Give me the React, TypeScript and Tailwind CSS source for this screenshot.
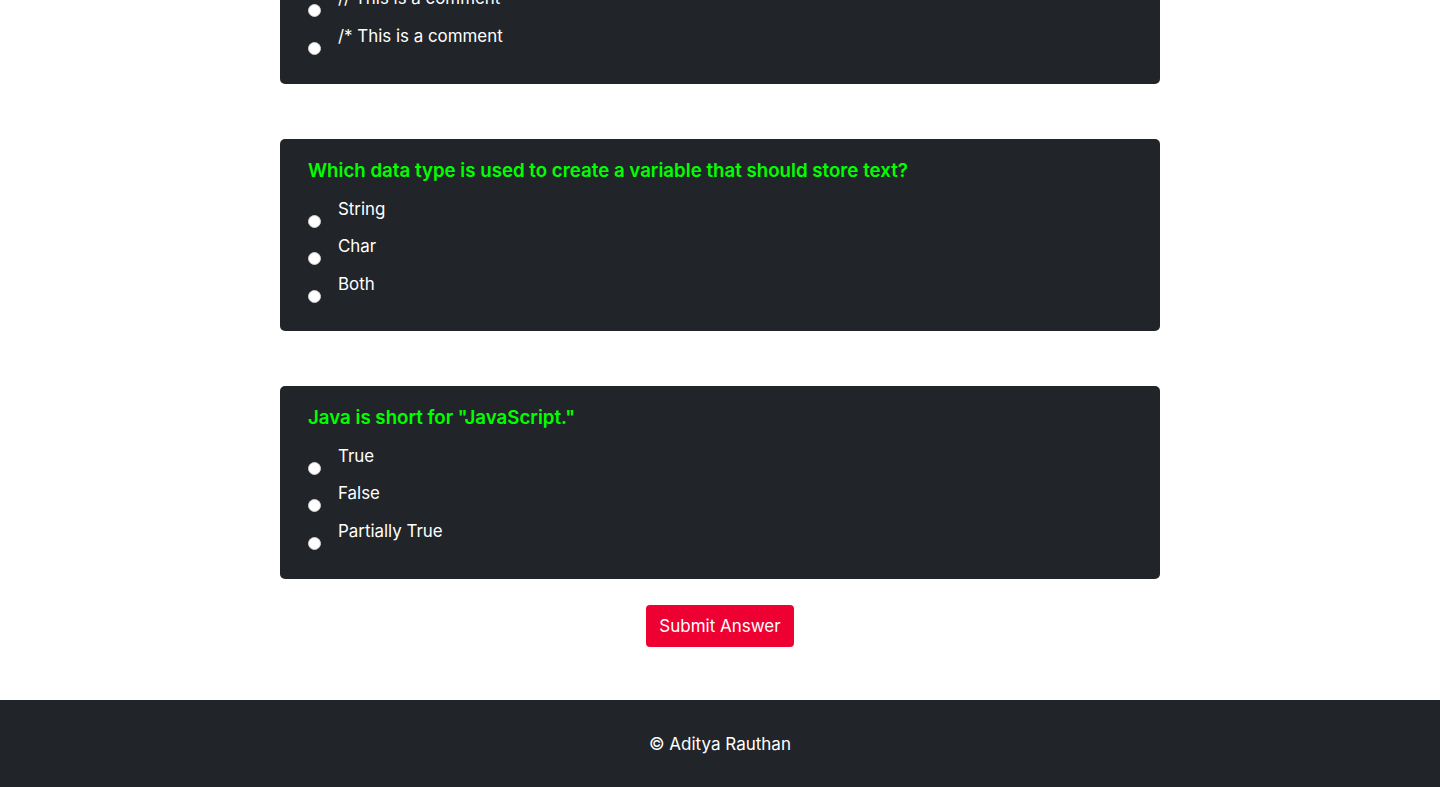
import React from "react";

const Radio = () => (
  <span className="absolute left-[27.5px] top-[19px] block h-[13px] w-[13px] rounded-full border border-[#d0d0d0] bg-white" />
);

const Option = ({ label }: { label: string }) => (
  <div className="relative h-[37.5px]">
    <Radio />
    <span className="absolute left-[58px] top-0 text-[16.9px] leading-[27px] text-white">{label}</span>
  </div>
);

const Card = ({ title, options, extra }: { title: string; options: string[]; extra?: boolean }) => (
  <div className={`rounded-[5px] bg-[#212529] pt-[19px] ${extra ? "pb-[24px]" : "pb-[23px]"}`}>
    <h3 className="pl-[28px] text-[18.7px] font-semibold leading-[26px] text-[#00ff00]">{title}</h3>
    <div className="mt-[11.5px]">
      {options.map((o) => (
        <Option key={o} label={o} />
      ))}
    </div>
  </div>
);

export default function App() {
  return (
    <div className="min-h-[787px] bg-white font-['Inter',sans-serif]">
      <div className="mx-auto w-[880px]">
        <div className="overflow-hidden rounded-b-[5px] bg-[#212529] pb-[24px]">
          <div className="-mt-[15px]">
            <Option label="// This is a comment" />
            <Option label="/* This is a comment" />
          </div>
        </div>
        <div className="mt-[55px]">
          <Card
            title="Which data type is used to create a variable that should store text?"
            options={["String", "Char", "Both"]}
          />
        </div>
        <div className="mt-[55px]">
          <Card extra title={'Java is short for "JavaScript."'} options={["True", "False", "Partially True"]} />
        </div>
        <div className="mt-[26px] flex justify-center">
          <button className="h-[42px] w-[148px] rounded-[4px] bg-[#ee0033] pt-[2px] text-[17px] text-white">
            Submit Answer
          </button>
        </div>
      </div>
      <footer className="mt-[53px] flex h-[87px] items-center justify-center bg-[#212529] pt-[2px] text-[17px] text-white">
        © Aditya Rauthan
      </footer>
    </div>
  );
}
